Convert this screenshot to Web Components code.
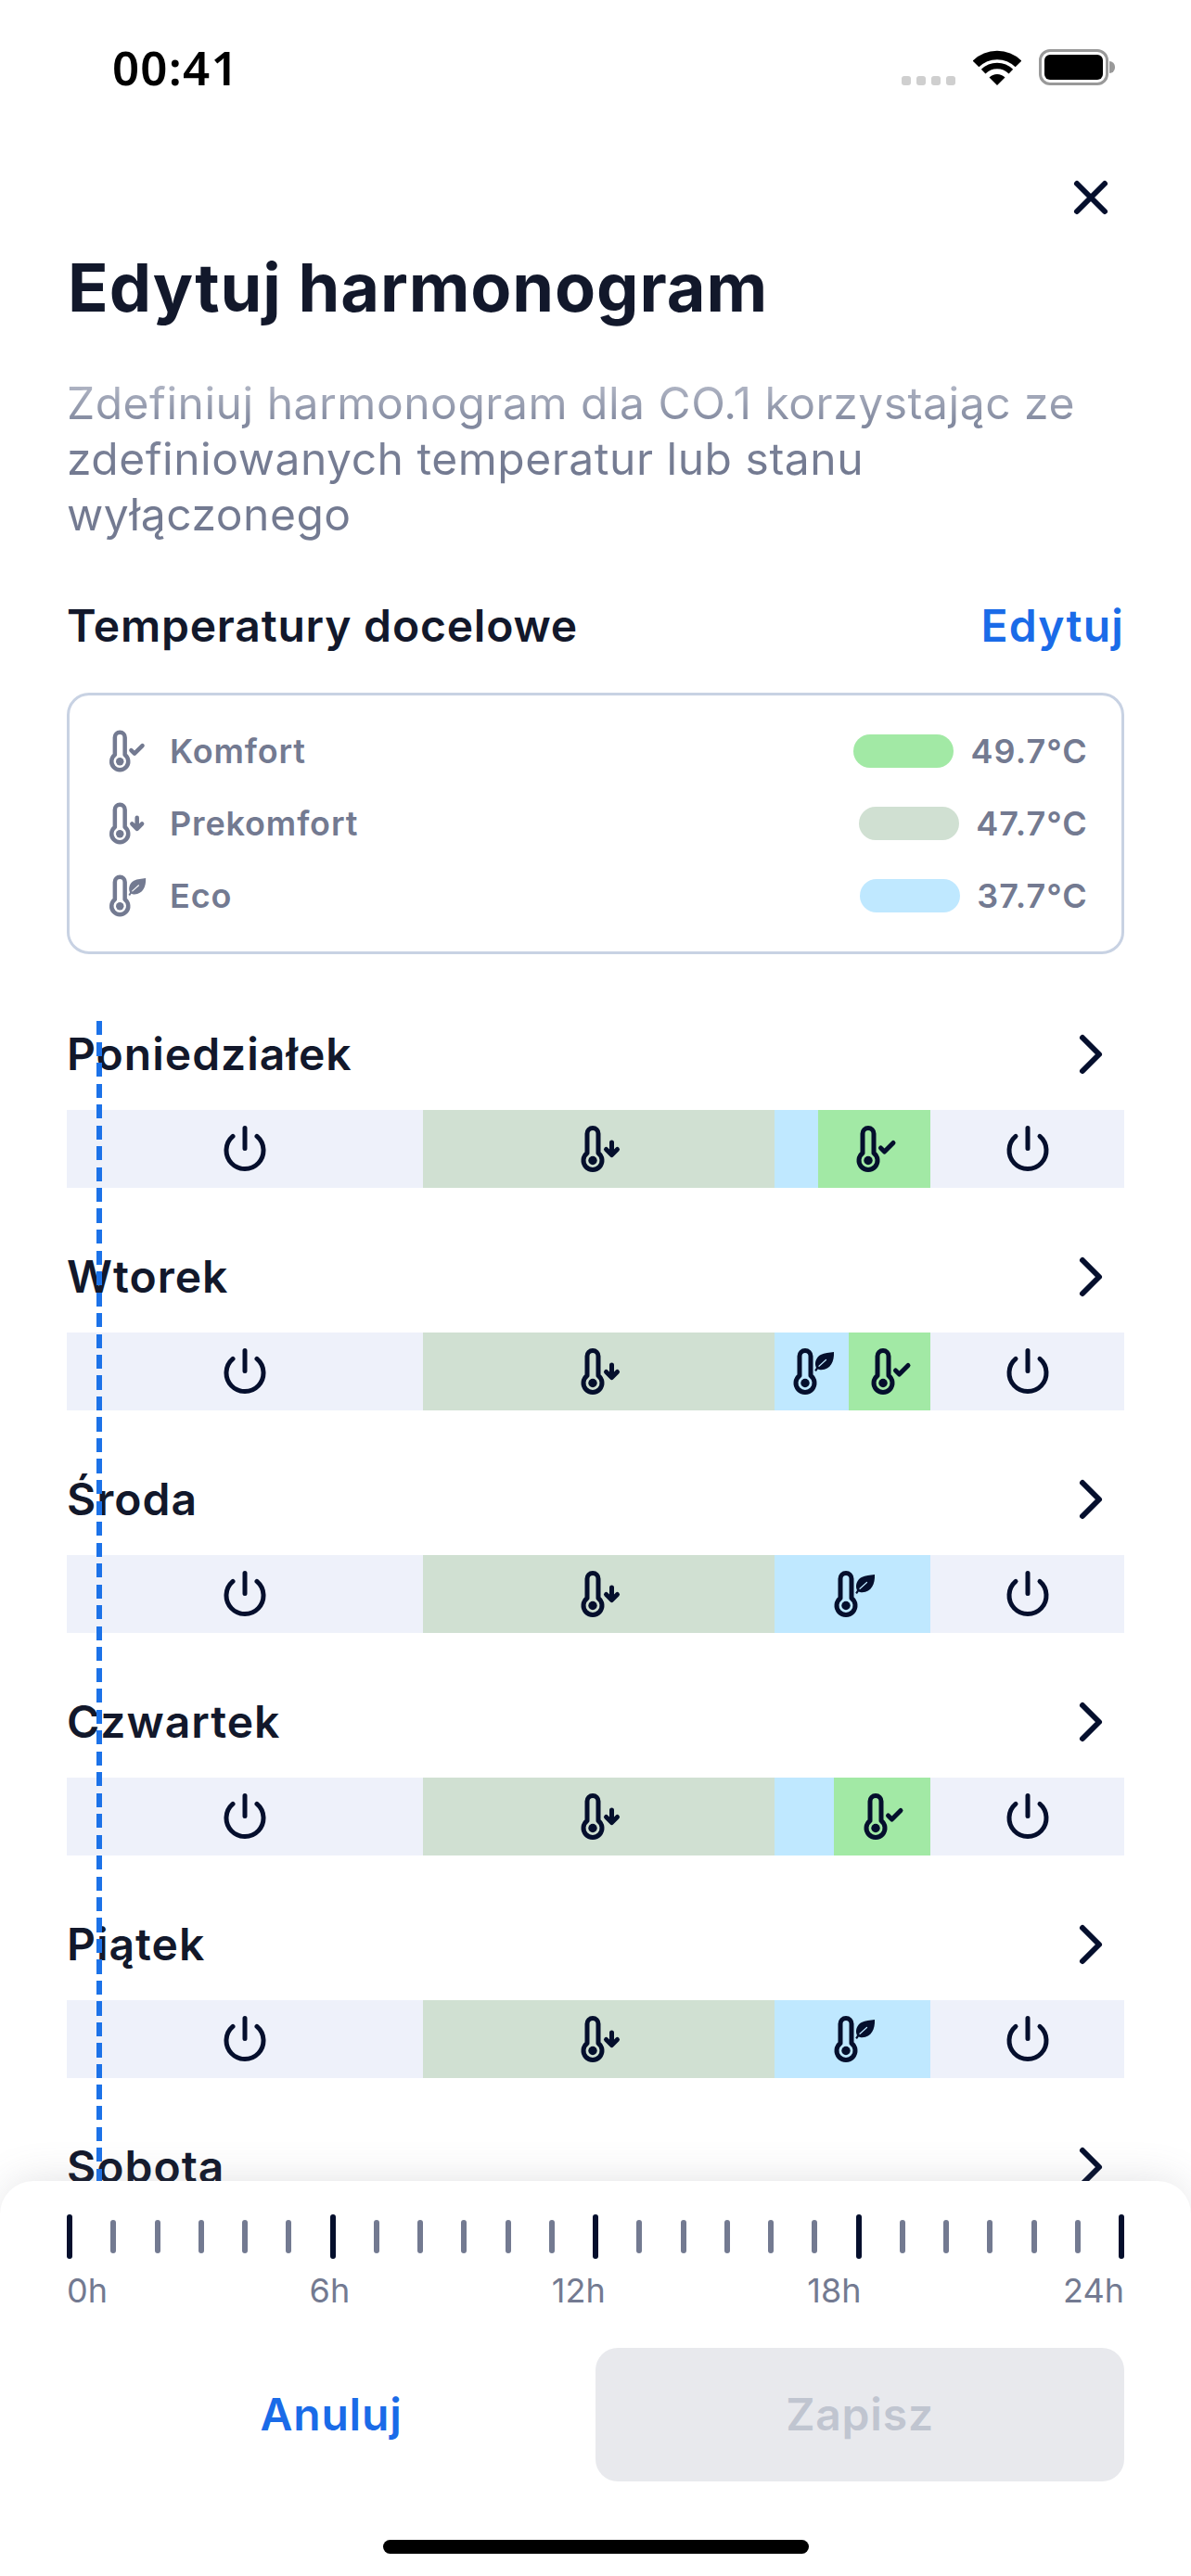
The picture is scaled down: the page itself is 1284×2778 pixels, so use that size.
<!DOCTYPE html>
<html lang="pl">
<head>
<meta charset="utf-8">
<title>Edytuj harmonogram</title>
<style>
  html, body { margin: 0; padding: 0; background: #fff; }
  body { font-family: Inter, "Liberation Sans", sans-serif; }
</style>
</head>
<body>
<template id="t-page">
  <style>
    :host { display: block; position: relative; width: 1284px; height: 2778px; overflow: hidden; background: #fff; color: #12182B; font-family: Inter, "Liberation Sans", sans-serif; }
    .content { display: flex; flex-direction: column; padding: 0 72px; }
    .close { display: flex; justify-content: flex-end; margin-top: 66px; }
    h1 { margin: 19px 0 0 1px; font: 700 72px/84px Inter, sans-serif; letter-spacing: .9px; color: #12182B; }
    .lead { margin: 53px 0 0; font: 400 48px/60px Inter, sans-serif; letter-spacing: .52px; color: transparent;
      background: linear-gradient(180deg, #B0B5C4 10px, #858CA1 48px, #737A91 100px); -webkit-background-clip: text; background-clip: text; }
    .head { display: flex; justify-content: space-between; align-items: center; margin-top: 60px; font: 600 48px/60px Inter, sans-serif; letter-spacing: .8px; }
    .head a { color: #1A6BE8; letter-spacing: 1.2px; }
  </style>
  <status-bar></status-bar>
  <div class="content">
    <div class="close"><ui-icon name="close"></ui-icon></div>
    <h1>Edytuj harmonogram</h1>
    <p class="lead">Zdefiniuj harmonogram dla CO.1 korzystając ze zdefiniowanych temperatur lub stanu wyłączonego</p>
    <div class="head"><span>Temperatury docelowe</span><a>Edytuj</a></div>
    <temp-card></temp-card>
    <slot></slot>
  </div>
  <action-sheet></action-sheet>
</template>

<template id="t-status">
  <style>
    :host { display: flex; justify-content: space-between; align-items: flex-end; box-sizing: border-box; height: 111px; padding: 0 82px 19px 121px; }
    .time { font: 600 51px/60px "Noto Sans", sans-serif; letter-spacing: 1.2px; color: #000; margin-bottom: -10px; }
    .right { display: flex; align-items: flex-end; gap: 19px; }
    .dots { display: flex; gap: 6px; }
    .dots i { width: 10px; height: 10px; border-radius: 3px; background: #CFCFCF; }
    svg { display: block; }
    .bat { display: flex; align-items: center; gap: 1px; }
    .shell { box-sizing: border-box; width: 75px; height: 39px; border: 3px solid #999; border-radius: 12px; padding: 3px; }
    .shell i { display: block; height: 100%; background: #000; border-radius: 6px; }
    .nub { width: 6px; height: 13px; background: #999; border-radius: 0 6px 6px 0; }
  </style>
  <span class="time">00:41</span>
  <div class="right">
    <div class="dots"><i></i><i></i><i></i><i></i></div>
    <svg width="52" height="38" viewBox="0 0 52 38" aria-hidden="true">
      <path d="M3 15A32.5 32.5 0 0 1 49 15" fill="none" stroke="#000" stroke-width="9.5"/>
      <path d="M11.15 23.15A21 21 0 0 1 40.85 23.15" fill="none" stroke="#000" stroke-width="6.5"/>
      <path d="M26 38L17.5 29.5A12 12 0 0 1 34.5 29.5Z" fill="#000"/>
    </svg>
    <div class="bat"><div class="shell"><i></i></div><div class="nub"></div></div>
  </div>
</template>

<template id="t-card">
  <style>
    :host { display: flex; flex-direction: column; gap: 30px; box-sizing: border-box; margin: 42px 0 72px; padding: 36px; border: 3px solid #C8D2E3; border-radius: 24px; }
  </style>
  <temp-row icon="thermo-check" label="Komfort" value="49.7°C" color="#A2E9A5"></temp-row>
  <temp-row icon="thermo-down" label="Prekomfort" value="47.7°C" color="#D0E0D2"></temp-row>
  <temp-row icon="thermo-leaf" label="Eco" value="37.7°C" color="#BFE8FF"></temp-row>
</template>

<template id="t-temp">
  <style>
    :host { display: flex; align-items: center; height: 48px; color: #737A91; font: 600 36px/48px Inter, sans-serif; letter-spacing: .85px; --icon-color: #737A91; --slit: #fff; }
    .label { margin-left: 24px; flex: 1; }
    .pill { width: 108px; height: 36px; border-radius: 18px; margin-right: 18px; }
    .value { letter-spacing: 1.1px; }
  </style>
  <ui-icon size="48" crop></ui-icon>
  <span class="label"></span>
  <span class="pill"></span>
  <span class="value"></span>
</template>

<template id="t-day">
  <style>
    :host { display: block; margin-bottom: 60px; }
    .head { display: flex; justify-content: space-between; align-items: center; height: 72px; font: 600 48px/60px Inter, sans-serif; letter-spacing: 1px; color: #12182B; }
    .bar { display: flex; height: 84px; margin-top: 24px; }
    :host([partial]) .bar { display: none; }
  </style>
  <div class="head"><span><slot name="name"></slot></span><ui-icon name="chevron"></ui-icon></div>
  <div class="bar"><slot></slot></div>
</template>

<template id="t-seg">
  <style>
    :host { display: flex; align-items: center; justify-content: center; height: 84px; flex: 0 0 auto; overflow: hidden; }
    :host([kind=off]) { background: #EEF1FA; --slit: #EEF1FA; }
    :host([kind=pre]) { background: #D0E0D2; --slit: #D0E0D2; }
    :host([kind=eco]) { background: #BFE8FF; --slit: #BFE8FF; }
    :host([kind=kom]) { background: #A2E9A5; --slit: #A2E9A5; }
  </style>
  <slot></slot>
</template>

<template id="t-ruler">
  <style>
    :host { display: block; }
    .ticks { display: flex; justify-content: space-between; align-items: center; height: 48px; }
    .ticks i { width: 6px; height: 36px; border-radius: 3px; background: #737A91; }
    .ticks i.major { height: 48px; background: #050F2D; }
    .labels { display: flex; justify-content: space-between; margin-top: 13px; font: 400 36px/42px Inter, sans-serif; color: #737A91; }
  </style>
  <div class="ticks"></div>
  <div class="labels"><span>0h</span><span>6h</span><span>12h</span><span>18h</span><span>24h</span></div>
</template>

<template id="t-sheet">
  <style>
    :host { display: flex; flex-direction: column; position: absolute; left: 0; right: 0; top: 2352px; bottom: 0; box-sizing: border-box; padding: 36px 72px 0; background: #fff; border-radius: 36px 36px 0 0; box-shadow: 0 -6px 44px -6px rgba(110,110,118,.2); }
    .actions { display: flex; margin-top: 41px; }
    .btn { flex: 1 1 0; display: flex; align-items: center; justify-content: center; height: 144px; border-radius: 24px; font: 600 48px/54px Inter, sans-serif; letter-spacing: .8px; }
    .cancel { color: #1A6BE8; }
    .save { background: #E8E9ED; color: #C0C5D0; }
    .home { align-self: center; width: 459px; height: 15px; margin-top: 63px; border-radius: 8px; background: #000; }
  </style>
  <time-ruler></time-ruler>
  <div class="actions"><div class="btn cancel">Anuluj</div><div class="btn save">Zapisz</div></div>
  <div class="home"></div>
</template>

<template id="t-days">
  <style>
    :host { display: block; position: relative; }
    .now { position: absolute; left: 32px; top: 0; width: 6px; height: 1260px; background: repeating-linear-gradient(180deg, #1C72E8 0 15px, transparent 15px 22.5px); }
  </style>
  <slot></slot>
  <div class="now"></div>
</template>

<app-page>
  <day-list>
    <day-row><span slot="name">Poniedziałek</span>
      <bar-seg kind="off" w="384"><ui-icon name="power"></ui-icon></bar-seg>
      <bar-seg kind="pre" w="379"><ui-icon name="thermo-down"></ui-icon></bar-seg>
      <bar-seg kind="eco" w="47"></bar-seg>
      <bar-seg kind="kom" w="121"><ui-icon name="thermo-check"></ui-icon></bar-seg>
      <bar-seg kind="off" w="209"><ui-icon name="power"></ui-icon></bar-seg>
    </day-row>
    <day-row><span slot="name">Wtorek</span>
      <bar-seg kind="off" w="384"><ui-icon name="power"></ui-icon></bar-seg>
      <bar-seg kind="pre" w="379"><ui-icon name="thermo-down"></ui-icon></bar-seg>
      <bar-seg kind="eco" w="80"><ui-icon name="thermo-leaf"></ui-icon></bar-seg>
      <bar-seg kind="kom" w="88"><ui-icon name="thermo-check"></ui-icon></bar-seg>
      <bar-seg kind="off" w="209"><ui-icon name="power"></ui-icon></bar-seg>
    </day-row>
    <day-row><span slot="name">Środa</span>
      <bar-seg kind="off" w="384"><ui-icon name="power"></ui-icon></bar-seg>
      <bar-seg kind="pre" w="379"><ui-icon name="thermo-down"></ui-icon></bar-seg>
      <bar-seg kind="eco" w="168"><ui-icon name="thermo-leaf"></ui-icon></bar-seg>
      <bar-seg kind="off" w="209"><ui-icon name="power"></ui-icon></bar-seg>
    </day-row>
    <day-row><span slot="name">Czwartek</span>
      <bar-seg kind="off" w="384"><ui-icon name="power"></ui-icon></bar-seg>
      <bar-seg kind="pre" w="379"><ui-icon name="thermo-down"></ui-icon></bar-seg>
      <bar-seg kind="eco" w="64"></bar-seg>
      <bar-seg kind="kom" w="104"><ui-icon name="thermo-check"></ui-icon></bar-seg>
      <bar-seg kind="off" w="209"><ui-icon name="power"></ui-icon></bar-seg>
    </day-row>
    <day-row><span slot="name">Piątek</span>
      <bar-seg kind="off" w="384"><ui-icon name="power"></ui-icon></bar-seg>
      <bar-seg kind="pre" w="379"><ui-icon name="thermo-down"></ui-icon></bar-seg>
      <bar-seg kind="eco" w="168"><ui-icon name="thermo-leaf"></ui-icon></bar-seg>
      <bar-seg kind="off" w="209"><ui-icon name="power"></ui-icon></bar-seg>
    </day-row>
    <day-row partial><span slot="name">Sobota</span></day-row>
  </day-list>
</app-page>

<script>
  const THERMO = '<path d="M23 19.5a6 6 0 0 1 12 0V40.5A10 10 0 1 1 23 40.5Z" fill="none" stroke="currentColor" stroke-width="5" stroke-linejoin="round"/><circle cx="29" cy="48.5" r="4.7" fill="currentColor"/>';
  const ICONS = {
    'close': '<path d="M21 21L51 51M51 21L21 51" fill="none" stroke="currentColor" stroke-width="6" stroke-linecap="round"/>',
    'chevron': '<path d="M27 18L45 36L27 54" fill="none" stroke="currentColor" stroke-width="6" stroke-linecap="round" stroke-linejoin="round"/>',
    'power': '<path d="M36 13.5V35.5M23 22.4A20 20 0 1 0 49 22.4" fill="none" stroke="currentColor" stroke-width="5" stroke-linecap="round"/>',
    'thermo-check': THERMO + '<path d="M42.5 35L46.5 39L56 29.5" fill="none" stroke="currentColor" stroke-width="5" stroke-linecap="round" stroke-linejoin="round"/>',
    'thermo-down': THERMO + '<path d="M49.5 29V42M43.5 36.5L49.5 42.5L55.5 36.5" fill="none" stroke="currentColor" stroke-width="5" stroke-linecap="round" stroke-linejoin="round"/>',
    'thermo-leaf': THERMO + '<path d="M60 15C60.5 25 56.5 34 46.5 34.3C44.8 34.3 43.5 34 42.7 33.5L41 36L39.2 34.8L41 32C38.5 27 41 20.5 45.8 18C50 15.9 55 16 60 15Z" fill="currentColor"/><path d="M44 30.3L51.5 23.5" fill="none" stroke="var(--slit,#fff)" stroke-width="1.2" stroke-linecap="round"/>'
  };
  function tpl(id) { return document.getElementById(id).content.cloneNode(true); }
  class Base extends HTMLElement {
    constructor(id) { super(); this.attachShadow({ mode: 'open' }).appendChild(tpl(id)); }
  }
  class UiIcon extends HTMLElement {
    constructor() { super(); this.attachShadow({ mode: 'open' }); }
    connectedCallback() { this.render(); }
    render() {
      const size = this.getAttribute('size') || 72;
      const vb = this.hasAttribute('crop') ? '8.72 9.33 53.33 53.33' : '0 0 72 72';
      const name = this.getAttribute('name');
      this.shadowRoot.innerHTML = '<style>:host{display:block;flex:0 0 auto;width:' + size + 'px;height:' + size + 'px;color:var(--icon-color,#050F2D)}svg{display:block}</style>' +
        '<svg width="' + size + '" height="' + size + '" viewBox="' + vb + '" aria-hidden="true">' + (ICONS[name] || '') + '</svg>';
    }
  }
  class AppPage extends Base { constructor() { super('t-page'); } }
  class StatusBar extends Base { constructor() { super('t-status'); } }
  class TempCard extends Base { constructor() { super('t-card'); } }
  class TempRow extends Base {
    constructor() { super('t-temp'); }
    connectedCallback() {
      const s = this.shadowRoot;
      const ic = s.querySelector('ui-icon');
      ic.setAttribute('name', this.getAttribute('icon'));
      if (ic.isConnected && ic.render) ic.render();
      s.querySelector('.label').textContent = this.getAttribute('label');
      s.querySelector('.value').textContent = this.getAttribute('value');
      s.querySelector('.pill').style.background = this.getAttribute('color');
    }
  }
  class DayList extends Base { constructor() { super('t-days'); } }
  class DayRow extends Base { constructor() { super('t-day'); } }
  class BarSeg extends Base {
    constructor() { super('t-seg'); }
    connectedCallback() { this.style.width = this.getAttribute('w') + 'px'; }
  }
  class TimeRuler extends Base {
    constructor() {
      super('t-ruler');
      const box = this.shadowRoot.querySelector('.ticks');
      for (let h = 0; h <= 24; h++) {
        const t = document.createElement('i');
        if (h % 6 === 0) t.className = 'major';
        box.appendChild(t);
      }
    }
  }
  class ActionSheet extends Base { constructor() { super('t-sheet'); } }
  customElements.define('ui-icon', UiIcon);
  customElements.define('status-bar', StatusBar);
  customElements.define('temp-row', TempRow);
  customElements.define('temp-card', TempCard);
  customElements.define('bar-seg', BarSeg);
  customElements.define('day-row', DayRow);
  customElements.define('day-list', DayList);
  customElements.define('time-ruler', TimeRuler);
  customElements.define('action-sheet', ActionSheet);
  customElements.define('app-page', AppPage);
</script>
</body>
</html>
